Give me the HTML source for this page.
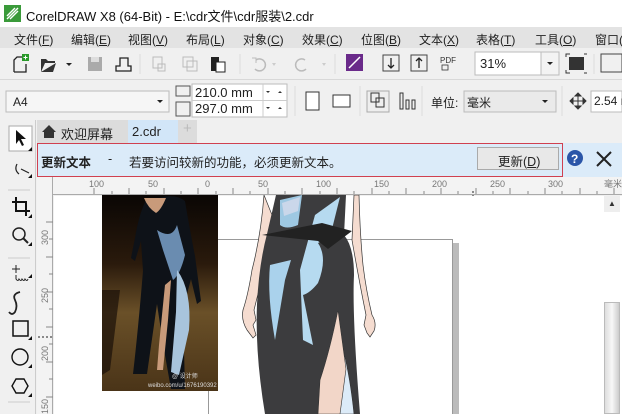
<!DOCTYPE html>
<html><head><meta charset="utf-8"><style>
*{margin:0;padding:0;box-sizing:border-box}
html,body{width:622px;height:414px;overflow:hidden}
body{background:#f0f0f0;font-family:"Liberation Sans","Noto Sans CJK SC",sans-serif;font-size:12px;color:#222;position:relative}
.a{position:absolute}
.t{white-space:nowrap}
.m{font-size:12px;top:31px}
</style></head><body>
<div class="a" style="left:0;top:0;width:622px;height:27px;background:#fff"></div>
<svg class="a" style="left:4px;top:5px" width="17" height="17"><rect width="17" height="17" fill="#3a9a3a"/><path d="M3 14 L14 3 M6 14 L14 6 M3 11 L11 3" stroke="#fff" stroke-width="1.4"/></svg>
<div class="a t" style="left:26px;top:6px;font-size:13px;color:#111">CorelDRAW X8 (64-Bit) - E:\cdr文件\cdr服装\2.cdr</div>
<div class="a" style="left:0;top:27px;width:622px;height:21px;background:#e3e3e3"></div>
<div class="a t m" style="left:14px">文件(<u>F</u>)</div>
<div class="a t m" style="left:71px">编辑(<u>E</u>)</div>
<div class="a t m" style="left:128px">视图(<u>V</u>)</div>
<div class="a t m" style="left:186px">布局(<u>L</u>)</div>
<div class="a t m" style="left:243px">对象(<u>C</u>)</div>
<div class="a t m" style="left:302px">效果(<u>C</u>)</div>
<div class="a t m" style="left:361px">位图(<u>B</u>)</div>
<div class="a t m" style="left:419px">文本(<u>X</u>)</div>
<div class="a t m" style="left:476px">表格(<u>T</u>)</div>
<div class="a t m" style="left:535px">工具(<u>O</u>)</div>
<div class="a t m" style="left:595px">窗口(</div>
<div class="a" style="left:0;top:48px;width:622px;height:32px;background:#f0f0f0;border-bottom:1px solid #d8d8d8"></div>
<svg class="a" style="left:0;top:48px" width="622" height="32">
<path d="M14 24 V12 L17 9 H23 M14 24 H26 V16" fill="none" stroke="#222" stroke-width="1.3"/><rect x="22" y="6" width="7" height="7" fill="#2a9a2a"/><path d="M25.5 7.5v4M23.5 9.5h4" stroke="#fff"/>
<path d="M41 24 V11 H46 L48 13 H55 V15 H45 L41 24 H53 L56 15" fill="#333"/><path d="M66 15 l3 3 l3 -3z" fill="#222"/>
<rect x="88" y="9" width="14" height="14" fill="#aaa"/><rect x="91" y="9" width="8" height="5" fill="#ddd"/>
<path d="M116 23 H131 V18 H128 V10 H120 V18 H116z" fill="none" stroke="#222" stroke-width="1.3"/>
<rect x="153" y="9" width="9" height="11" fill="none" stroke="#bbb"/><rect x="158" y="16" width="7" height="7" fill="none" stroke="#bbb"/>
<rect x="183" y="9" width="10" height="10" fill="none" stroke="#bbb"/><rect x="187" y="13" width="10" height="10" fill="none" stroke="#bbb"/>
<rect x="211" y="9" width="8" height="14" fill="#222"/><rect x="216" y="14" width="9" height="10" fill="#fff" stroke="#222"/>
<path d="M256 12 a6 6 0 1 1 -1 9" fill="none" stroke="#bbb" stroke-width="1.5"/><path d="M252 10 l4 0 l0 5" fill="none" stroke="#bbb"/>
<path d="M272 15 l2 3 l2-3z" fill="#ccc"/>
<path d="M305 12 a6 6 0 1 0 1 9" fill="none" stroke="#bbb" stroke-width="1.5"/>
<path d="M322 15 l2 3 l2-3z" fill="#ccc"/>
<line x1="240" y1="6" x2="240" y2="26" stroke="#ddd"/><line x1="140" y1="6" x2="140" y2="26" stroke="#ddd"/><line x1="335" y1="6" x2="335" y2="26" stroke="#ddd"/>
<rect x="346" y="6" width="17" height="17" fill="#6a2a8a"/><path d="M349 20 L360 9" stroke="#fff" stroke-width="1.5"/>
<rect x="383" y="7" width="16" height="16" fill="none" stroke="#444"/><path d="M391 10v10m-3 -3l3 3l3-3" fill="none" stroke="#222" stroke-width="1.3"/>
<rect x="411" y="7" width="16" height="16" fill="none" stroke="#444"/><path d="M419 20v-10m-3 3l3-3l3 3" fill="none" stroke="#222" stroke-width="1.3"/>
<text x="440" y="15" font-size="8" font-family="Liberation Sans" fill="#333">PDF</text><rect x="442" y="17" width="6" height="5" fill="none" stroke="#333" stroke-width=".8"/>
<rect x="475" y="4" width="66" height="23" fill="#fff" stroke="#bbb"/>
<rect x="541" y="4" width="18" height="23" fill="#f3f3f3" stroke="#bbb"/><path d="M547 14 l3 3 l3-3z" fill="#222"/>
<rect x="569" y="9" width="15" height="13" fill="#333"/><path d="M566 9v-3h4M587 6h-3M566 22v3h4M587 25h-3" fill="none" stroke="#333"/>
<line x1="594" y1="6" x2="594" y2="26" stroke="#ddd"/>
<rect x="601" y="6" width="21" height="18" fill="none" stroke="#444"/>
</svg>
<div class="a t" style="left:480px;top:56px;font-size:13px">31%</div>
<svg class="a" style="left:0;top:80px" width="622" height="40">
<rect x="6" y="11" width="163" height="21" fill="#f6f6f6" stroke="#bbb"/><path d="M157 20 l3 3 l3-3z" fill="#222"/>
<rect x="176" y="6" width="14" height="10" fill="none" stroke="#555"/><rect x="176" y="22" width="14" height="14" fill="none" stroke="#555"/>
<rect x="192" y="4" width="95" height="33" fill="#fff" stroke="#bbb"/><line x1="192" y1="20.5" x2="287" y2="20.5" stroke="#ccc"/><line x1="263" y1="4" x2="263" y2="37" stroke="#ccc"/>
<path d="M266 11 l2 2 l2-2z M278 13 l2-2 l2 2z M266 27 l2 2 l2-2z M278 29 l2-2 l2 2z" fill="#333"/>
<line x1="295" y1="6" x2="295" y2="36" stroke="#ddd"/>
<rect x="306" y="12" width="13" height="18" fill="#fff" stroke="#333"/><rect x="333" y="15" width="17" height="12" fill="#fff" stroke="#333"/>
<line x1="360" y1="6" x2="360" y2="36" stroke="#ddd"/>
<rect x="367" y="11" width="22" height="21" fill="#eee" stroke="#aaa"/><rect x="371" y="13" width="8" height="9" fill="none" stroke="#333"/><rect x="376" y="18" width="8" height="9" fill="none" stroke="#333"/>
<path d="M400 13v16h3v-16zM406 20v9h3v-9zM412 20v9h3v-9z" fill="none" stroke="#333"/>
<line x1="422" y1="6" x2="422" y2="36" stroke="#ddd"/>
<rect x="464" y="11" width="92" height="21" fill="#eaeaea" stroke="#bbb"/><path d="M542 20 l3 3 l3-3z" fill="#222"/>
<line x1="562" y1="6" x2="562" y2="36" stroke="#ddd"/>
<path d="M578 16v10M573 21h10M578 13l-3 3h6zM578 29l-3-3h6zM570 21l3-3v6zM586 21l-3-3v6z" fill="#333" stroke="#333"/>
<rect x="591" y="11" width="31" height="21" fill="#fff" stroke="#bbb"/>
</svg>
<div class="a t" style="left:13px;top:95px;font-size:12px">A4</div>
<div class="a t" style="left:195px;top:85px;font-size:13px">210.0 mm</div>
<div class="a t" style="left:195px;top:101px;font-size:13px">297.0 mm</div>
<div class="a t" style="left:431px;top:94px;font-size:12px">单位:</div>
<div class="a t" style="left:467px;top:94px;font-size:12px">毫米</div>
<div class="a t" style="left:594px;top:94px;font-size:12px">2.54 r</div>
<div class="a" style="left:0;top:120px;width:36px;height:294px;background:#f0f0f0;border-right:1px solid #ccc"></div>
<svg class="a" style="left:0;top:120px" width="36" height="294">
<rect x="9" y="6" width="23" height="25" fill="#fff" stroke="#aaa"/><path d="M16 10 v14 l3-4 l3 6 l2-1 l-3-6 h5z" fill="#111"/><path d="M32 31 l-4 0 l4-4z" fill="#111"/>
<path d="M17 44 q-3 6 2 10 M21 49 l8 4" fill="none" stroke="#222" stroke-width="1.2"/><path d="M32 58 l-4 0 l4-4z" fill="#111"/>
<line x1="8" y1="70" x2="30" y2="70" stroke="#ccc"/>
<path d="M16 77v14h14M12 82h14v14" fill="none" stroke="#111" stroke-width="2"/><path d="M32 98 l-4 0 l4-4z" fill="#111"/>
<circle cx="19" cy="114" r="6" fill="none" stroke="#222" stroke-width="1.5"/><path d="M23 118 l5 5" stroke="#222" stroke-width="2"/><path d="M32 126 l-4 0 l4-4z" fill="#111"/>
<line x1="8" y1="138" x2="30" y2="138" stroke="#ccc"/>
<path d="M16 145v8M12 149h8M16 155v4 q2 3 3 0 q2 3 3 0 q2 3 3 0 q2 3 3 0" fill="none" stroke="#222"/><path d="M32 158 l-4 0 l4-4z" fill="#111"/>
<path d="M20 172 q-8 2 -5 8 q3 6 0 12 q-3 4 -6 0" fill="none" stroke="#222" stroke-width="1.8"/>
<rect x="13" y="201" width="15" height="15" fill="none" stroke="#111" stroke-width="1.5"/><path d="M32 220 l-4 0 l4-4z" fill="#111"/>
<circle cx="20" cy="237" r="8" fill="none" stroke="#111" stroke-width="1.4"/><path d="M32 248 l-4 0 l4-4z" fill="#111"/>
<path d="M16 259 h8 l4 7 l-4 7 h-8 l-4 -7z" fill="none" stroke="#111" stroke-width="1.4"/><path d="M32 277 l-4 0 l4-4z" fill="#111"/>
<line x1="8" y1="282" x2="30" y2="282" stroke="#ccc"/>
</svg>
<div class="a" style="left:37px;top:120px;width:160px;height:23px;background:#dcdcdc"></div>
<svg class="a" style="left:41px;top:124px" width="16" height="14"><path d="M1 8 L8 1 L15 8 H13 V14 H3 V8z" fill="#333"/></svg>
<div class="a t" style="left:61px;top:124px;font-size:13px">欢迎屏幕</div>
<div class="a" style="left:128px;top:120px;width:50px;height:23px;background:#d2e6f8"></div>
<div class="a t" style="left:132px;top:124px;font-size:13px">2.cdr</div>
<div class="a t" style="left:183px;top:120px;font-size:15px;color:#bbb">+</div>
<div class="a" style="left:37px;top:143px;width:585px;height:34px;background:#dbebf9"></div>
<div class="a" style="left:37px;top:143px;width:526px;height:34px;border:1px solid #d04050"></div>
<div class="a t" style="left:41px;top:152px;font-size:12.5px;font-weight:bold">更新文本</div>
<div class="a t" style="left:108px;top:152px;font-size:12.5px">-</div>
<div class="a t" style="left:129px;top:152px;font-size:12.5px">若要访问较新的功能，必须更新文本。</div>
<div class="a" style="left:477px;top:147px;width:82px;height:23px;background:#e8e8e8;border:1px solid #aaa"></div>
<div class="a t" style="left:498px;top:151px;font-size:12.5px">更新(<u>D</u>)</div>
<svg class="a" style="left:566px;top:149px" width="52" height="20"><circle cx="9" cy="9" r="8" fill="#2a55a8"/><text x="5" y="14" font-size="12" font-weight="bold" fill="#fff" font-family="Liberation Sans">?</text><path d="M31 3 L45 17 M45 3 L31 17" stroke="#222" stroke-width="2"/></svg>
<div class="a" style="left:37px;top:177px;width:585px;height:18px;background:#f3f3f3;border-bottom:1px solid #aaa"></div>
<div class="a" style="left:37px;top:177px;width:16px;height:237px;background:#f3f3f3;border-right:1px solid #aaa"></div>
<svg class="a" style="left:37px;top:177px" width="585" height="237">
<g stroke="#888" stroke-width="1">
<path d="M57 11v6M75 14v3M92 11v6M109 14v3M127 11v6M144 14v3M161 11v6M179 14v3M196 11v6M213 14v3M231 11v6M248 14v3M265 11v6M283 14v3M300 11v6M317 14v3M335 11v6M352 14v3M369 11v6M387 14v3M404 11v6M421 14v3M439 11v6M456 14v3M473 11v6M491 14v3M508 11v6M525 14v3M543 11v6M560 14v3M577 11v6"/>
<path d="M9 45h7M12 62h4M9 80h7M12 97h4M9 115h7M12 132h4M9 150h7M12 167h4M9 185h7M12 202h4M9 220h7"/>
</g>
<path d="M436 14v20" stroke="#222" stroke-dasharray="2 2"/>
<path d="M1 160h15" stroke="#222" stroke-dasharray="2 2"/>
<g font-size="9" fill="#777" font-family="Liberation Sans">
<text x="52" y="10">100</text><text x="111" y="10">50</text><text x="168" y="10">0</text><text x="221" y="10">50</text><text x="279" y="10">100</text><text x="337" y="10">150</text><text x="395" y="10">200</text><text x="453" y="10">250</text><text x="511" y="10">300</text><text x="567" y="10">毫米</text>
<text transform="translate(11,68) rotate(-90)">300</text><text transform="translate(11,126) rotate(-90)">250</text><text transform="translate(11,184) rotate(-90)">200</text><text transform="translate(11,237) rotate(-90)">150</text>
</g>
</svg>
<div class="a" style="left:54px;top:196px;width:550px;height:218px;background:#fff"></div>
<div class="a" style="left:604px;top:196px;width:18px;height:218px;background:#fff"></div>
<div class="a" style="left:604px;top:196px;width:16px;height:16px;background:#eee;color:#333;font-size:8px;text-align:center;line-height:16px">▲</div>
<div class="a" style="left:604px;top:302px;width:16px;height:112px;background:linear-gradient(90deg,#ddd,#f8f8f8,#ccc);border:1px solid #bbb"></div>
<div class="a" style="left:208px;top:239px;width:245px;height:175px;border:1px solid #999;border-bottom:none;background:#fff"></div>
<div class="a" style="left:453px;top:243px;width:6px;height:171px;background:#bbb"></div>
<svg class="a" style="left:102px;top:195px" width="116" height="196">
<defs><linearGradient id="bg" x1="0" y1="0" x2="0" y2="1"><stop offset="0" stop-color="#0a0604"/><stop offset=".35" stop-color="#2a1a0c"/><stop offset=".6" stop-color="#6a5028"/><stop offset="1" stop-color="#4a3418"/></linearGradient></defs>
<rect width="116" height="196" fill="url(#bg)"/>
<path d="M0 95 L18 95 L8 175 L0 180z" fill="#1a1008" opacity=".7"/>
<path d="M45 3 q-8 15 -12 40 l-4 20 l4 3 l6 -20 l2 30 q-5 60 -10 103 l14 0 l10 -70 l6 40 l8 45 l14 0 l-2 -80 l8 -30 l6 25 l4 -3 l-6 -45 q-5 -25 -10 -55 q-10 -8 -26 -3z" fill="#0e1218"/>
<path d="M55 35 q15 10 20 -5 l8 30 q-5 20 -12 25 l-10 -30z" fill="#6a8cb0"/>
<path d="M75 75 q15 20 12 60 l-10 45 l-8 -3 l5 -60z" fill="#a8c4dc"/>
<path d="M63 90 l-6 60 l-2 25 l6 0 l5 -50 l3 -40z" fill="#c89a7a"/>
<path d="M42 3 l22 0 q-5 12 -10 15 q-8 -5 -12 -15z" fill="#c89a7a"/>
<text x="70" y="183" font-size="6" fill="#ddd">@ 设计师</text><text x="46" y="192" font-size="6" fill="#ddd">weibo.com/u/1676190392</text>
</svg>
<svg class="a" style="left:230px;top:195px" width="170" height="219">
<path d="M34 0 q-3 40 -12 75 q-4 25 -9 40 q-2 10 4 20 l6 8 l3 -3 l-3 -10 l3 -5 l-2 -10 q5 -20 10 -40 l10 -50z" fill="#f5dcd0" stroke="#333" stroke-width=".7"/>
<path d="M124 0 l-2 45 q6 35 14 75 l-2 10 l3 8 l3 4 l4 -6 q3 -8 -2 -16 q-6 -25 -9 -50 q-3 -30 -4 -70z" fill="#f5dcd0" stroke="#333" stroke-width=".7"/>
<path d="M46 0 h70 l-2 40 q10 12 10 40 q-2 40 6 139 h-95 q-10 -60 -8 -110 q2 -40 10 -70z" fill="#3c3c3e"/>
<path d="M50 5 l22 -5 l-4 30 q-12 5 -18 0z" fill="#9ec8e2"/>
<path d="M52 8 l18 -6 l-2 14 l-14 5z" fill="#dde" opacity=".7"/>
<path d="M85 20 l25 -18 l-10 40 l-12 6 q10 15 0 40 q-8 10 -15 12 l10 50 l-10 -5 l-3 -70z" fill="#b6daf0"/>
<path d="M40 70 q-3 30 5 75 l10 -60 l6 -20z" fill="#aad2ec"/>
<path d="M112 150 q8 30 12 69 l-30 0 l5 -50z" fill="#dcebf8" stroke="#333" stroke-width=".6"/>
<path d="M108 115 q-8 40 -18 70 l-2 34 l22 0 l6 -45 z" fill="#f2d6c8" stroke="#333" stroke-width=".6"/>
<path d="M32 40 l60 -12 l30 8 l-24 18 l-10 -8 z" fill="#222"/>
</svg>
</body></html>
